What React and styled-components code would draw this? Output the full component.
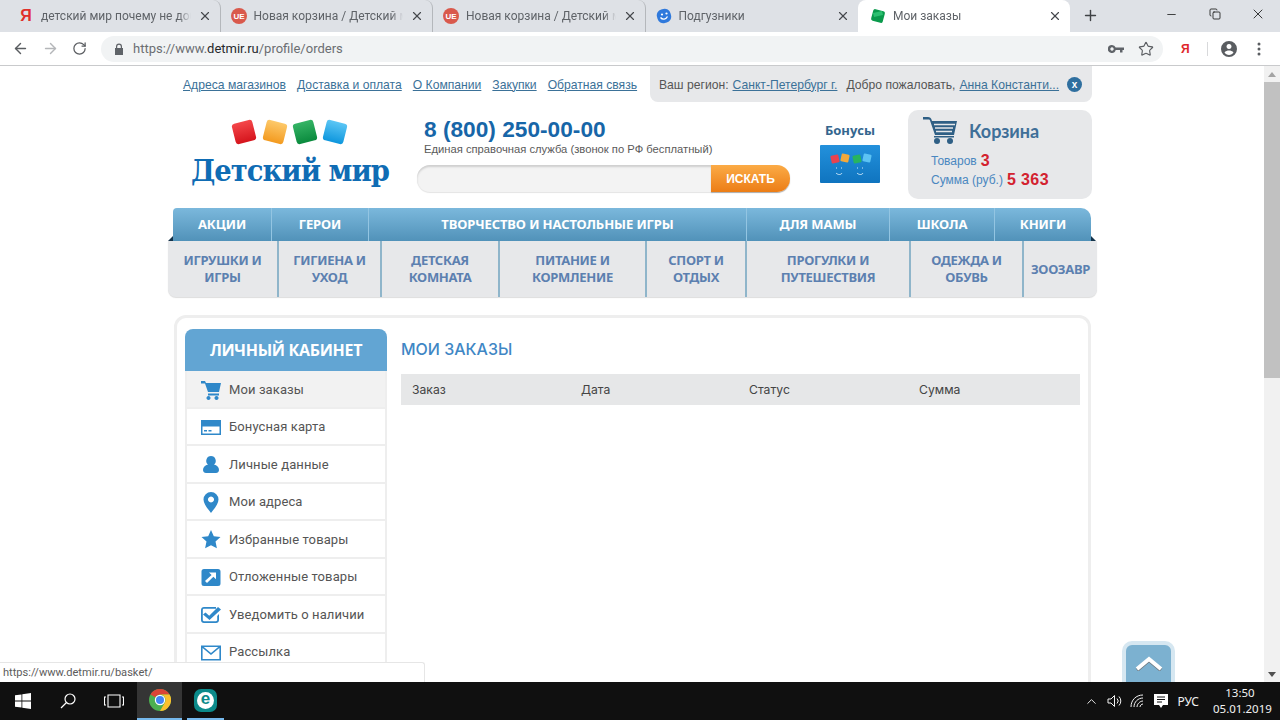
import React from 'react';
import styled, { createGlobalStyle } from 'styled-components';
import { ArrowLeft, ArrowRight, RotateCw, Star, Plus, X, Minus, Copy, ChevronUp } from 'lucide-react';

const GlobalStyle = createGlobalStyle`
  html, body { margin: 0; padding: 0; height: 100%; overflow: hidden; background: #fff; }
  * { box-sizing: border-box; }
`;

const Screen = styled.div`
  width: 1280px;
  height: 720px;
  display: flex;
  flex-direction: column;
  overflow: hidden;
  font-family: "Liberation Sans", Arial, sans-serif;
`;

/* browser chrome */
const TabStrip = styled.div`
  height: 32px;
  flex: none;
  background: #dee1e6;
  display: flex;
  padding-left: 8px;
`;

const Tab = styled.div`
  width: ${p => (p.$active ? '212px' : '212.5px')};
  height: 32px;
  display: flex;
  align-items: center;
  padding: 0 7px 0 ${p => (p.$active ? '10px' : '8px')};
  gap: 7px;
  background: ${p => (p.$active ? '#fff' : 'transparent')};
  border-radius: 8px 8px 0 0;
  border-right: ${p => (p.$sep ? '1px solid #b4b7bb' : '0')};
  background-clip: padding-box;
`;

const TabIcon = styled.span`
  width: 16px;
  height: 16px;
  flex: none;
  margin-left: 2px;
  display: flex;
  align-items: center;
  justify-content: center;
`;

const TabTitle = styled.span`
  flex: 1;
  min-width: 0;
  white-space: nowrap;
  overflow: hidden;
  font: 12px "Roboto", sans-serif;
  color: #5f6368;
  -webkit-mask-image: linear-gradient(to right, #000 92%, transparent 100%);
`;

const TabClose = styled(X)`
  flex: none;
  width: 14px;
  height: 14px;
  color: #45484c;
  margin-right: 1px;
`;

const NewTab = styled(Plus)`
  width: 17px;
  height: 17px;
  margin: 7px 0 0 12px;
  color: #3f4245;
`;

const WindowButtons = styled.div`
  margin-left: auto;
  display: flex;
  height: 28px;
  align-items: center;
  color: #1c1c1c;
`;

const WindowButton = styled.span`
  width: 43.5px;
  display: flex;
  justify-content: center;
`;

const Toolbar = styled.div`
  height: 34px;
  flex: none;
  background: #fff;
  border-bottom: 1px solid #c9cacc;
  display: flex;
  align-items: center;
  padding: 0 0 0 12px;
  color: #5f6368;
`;

const NavIcon = styled.span`
  width: 30px;
  display: flex;
  color: ${p => (p.$off ? '#b4b6b9' : '#5a5d61')};
`;

const Omnibox = styled.div`
  margin-left: -1px;
  width: 1062px;
  height: 26px;
  border-radius: 13px;
  background: #f1f3f4;
  display: flex;
  align-items: center;
  padding-left: 13px;
`;

const Url = styled.span`
  margin-left: 9px;
  font: 13px "Roboto", sans-serif;
  color: #6b6e72;
  b { font-weight: 400; color: #27292c; }
`;

const OmniTools = styled.div`
  margin-left: auto;
  display: flex;
  align-items: center;
  gap: 14px;
  padding-right: 9px;
`;

const ToolArea = styled.div`
  display: flex;
  align-items: center;
  flex: 1;
`;

const YaMark = styled.span`
  margin-left: 18px;
  width: 27px;
  font: bold 12px "Liberation Sans", sans-serif;
  color: #e0262b;
  border-right: 1px solid #d8d9db;
`;

/* the page itself */
const Viewport = styled.div`
  flex: 1;
  min-height: 0;
  display: flex;
  position: relative;
`;

const PageBody = styled.div`
  flex: 1;
  overflow: hidden;
`;

const Container = styled.div`
  width: 929px;
  margin-left: 168px;
`;

const TopBar = styled.div`
  height: 36px;
  display: flex;
  padding: 0 5px 0 15px;
`;

const TopLinks = styled.div`
  display: flex;
  align-items: center;
  gap: 11px;
  padding-top: 1px;
`;

const TopLink = styled.a`
  font-size: 12.15px;
  color: #3b7198;
  text-decoration: underline;
`;

const RegionBox = styled.div`
  margin-left: auto;
  width: 442px;
  background: #e7e8ea;
  border-radius: 0 0 8px 8px;
  display: flex;
  align-items: center;
  padding: 1px 0 0 9px;
  font-size: 12.15px;
  color: #555;
  white-space: nowrap;
`;

const RegionLink = styled.a`
  color: #3b7198;
  text-decoration: underline;
  margin: 0 ${p => p.$gap || 0}px 0 4px;
`;

const CloseBadge = styled.span`
  margin-left: auto;
  margin-right: 10px;
  width: 15px;
  height: 15px;
  border-radius: 50%;
  background: #2f6f9f;
  color: #fff;
  font: bold 10px/15px "Liberation Sans", sans-serif;
  text-align: center;
`;

const Header = styled.div`
  margin-top: 8px;
  height: 88px;
  display: flex;
  padding-left: 22px;
`;

const LogoBlock = styled.div`
  width: 200px;
  display: flex;
  flex-direction: column;
  align-items: center;
  padding-top: 8px;
`;

const LogoText = styled.div`
  font: bold 30.5px/38px "DejaVu Serif Condensed", "Liberation Serif", serif;
  color: #0f6cb4;
  white-space: nowrap;
  margin-top: 5px;
  letter-spacing: -1px;
`;

const InfoBlock = styled.div`
  width: 373px;
  margin-left: 27px;
`;

const Phone = styled.div`
  margin: 7px 0 0 7px;
  font: bold 22.7px/24px "Liberation Sans", sans-serif;
  color: #1766a8;
`;

const Hotline = styled.div`
  margin: 1px 0 0 7px;
  font-size: 11.22px;
  line-height: 14px;
  color: #5a5a5a;
`;

const SearchRow = styled.div`
  margin-top: 9px;
  display: flex;
  height: 27px;
`;

const SearchInput = styled.input`
  width: 296px;
  height: 27px;
  border: 0;
  outline: none;
  border-radius: 13px 0 0 13px;
  background: #f3f3f3;
  box-shadow: inset 0 2px 2px #cfcfcf, 0 1px 1px #e4e4e4;
`;

const SearchButton = styled.button`
  width: 79px;
  height: 27px;
  margin-left: -2px;
  border: 0;
  padding: 0;
  border-radius: 0 13px 13px 0;
  background: linear-gradient(#fbab46, #ec7d16);
  box-shadow: 0 1px 1px #aaa;
  color: #fff;
  font: bold 12px "Liberation Sans", sans-serif;
`;

const BonusBlock = styled.div`
  margin-left: 30px;
  width: 60px;
  display: flex;
  flex-direction: column;
  align-items: center;
`;

const BonusTitle = styled.div`
  margin-top: 12px;
  font: bold 13px/16px "Open Sans", sans-serif;
  color: #34668e;
  white-space: nowrap;
`;

const BonusCard = styled.svg`
  margin-top: 7px;
  width: 60px;
  height: 38px;
  display: block;
`;

const CartBox = styled.div`
  margin-left: 28px;
  width: 184px;
  height: 89px;
  border-radius: 10px;
  background: #e7e8ea;
  padding: 7px 0 0 15px;
`;

const CartHead = styled.div`
  display: flex;
  align-items: center;
  gap: 12px;
  margin-bottom: 6px;
`;

const CartTitle = styled.div`
  font: bold 18px "Lato", sans-serif;
  color: #3f6f98;
`;

const CartLine = styled.div`
  margin-left: 8px;
  height: 19px;
  display: flex;
  align-items: center;
  gap: 4px;
  font-size: 12px;
  color: #4a87c0;
`;

const CartValue = styled.span`
  font: bold 16px "Liberation Sans", sans-serif;
  color: #d3222f;
  letter-spacing: 0.4px;
`;

const NavTop = styled.div`
  position: relative;
  margin: 10px 6px 0 5px;
  height: 33px;
  display: grid;
  grid-template-columns: 98px 97px 378px 143px 105px 97px;
  background: linear-gradient(#7bb8dc, #5192b9);
  border-radius: 4px 10px 0 0;
  &::before, &::after {
    content: '';
    position: absolute;
    bottom: 0;
    border-bottom: 5px solid #14334a;
  }
  &::before { left: -5px; border-left: 5px solid transparent; }
  &::after { right: -5px; border-right: 5px solid transparent; }
`;

const NavTopCell = styled.a`
  display: flex;
  align-items: center;
  justify-content: center;
  padding-bottom: 1px;
  font: bold 13px "Noto Sans", sans-serif;
  letter-spacing: -0.1px;
  color: #fff;
  border-left: ${p => (p.$first ? '0' : '1px solid #93c5e2')};
`;

const NavBottom = styled.div`
  height: 56px;
  display: grid;
  grid-template-columns: 109px 103px 118px 147px 100px 164px 113px 75px;
  background: #e7e8ea;
  border-radius: 0 0 8px 8px;
  box-shadow: 0 1px 1px #ddd;
`;

const NavBottomCell = styled.a`
  display: flex;
  align-items: center;
  justify-content: center;
  text-align: center;
  white-space: pre-line;
  font: bold 13px/17px "Noto Sans", sans-serif;
  letter-spacing: -0.3px;
  color: #5c80b0;
  border-left: ${p => (p.$first ? '0' : '2px solid #8fb5ca')};
`;

const Card = styled.div`
  margin: 18px 6px 0 6px;
  width: 917px;
  border: 3px solid #eeeeee;
  border-radius: 12px;
  padding: 11px 8px 0;
  display: flex;
  gap: 14px;
  height: 500px;
`;

const Sidebar = styled.aside`
  width: 202px;
  flex: none;
`;

const SidebarHead = styled.div`
  height: 42px;
  border-radius: 8px 8px 0 0;
  background: #62a5d3;
  display: flex;
  align-items: center;
  justify-content: center;
  padding-bottom: 1px;
  font: bold 16px "Open Sans", sans-serif;
  letter-spacing: -0.3px;
  color: #fff;
`;

const SideItem = styled.a`
  height: 37.5px;
  display: flex;
  align-items: center;
  padding: 1px 0 0 13px;
  border: 2px solid #eeeeee;
  border-width: 0 2px 2px;
  background: ${p => (p.$active ? '#f2f2f2' : '#fff')};
  font: 13px "Roboto", sans-serif;
  letter-spacing: 0.1px;
  color: #555;
`;

const SideIcon = styled.svg`
  width: 22px;
  height: 22px;
  margin-right: 7px;
  flex: none;
  fill: #2f88c9;
`;

const Content = styled.main`
  flex: 1;
  min-width: 0;
`;

const ContentTitle = styled.h1`
  margin: 0;
  height: 40px;
  display: flex;
  align-items: center;
  font: 500 16px "Inter", sans-serif;
  color: #3f87c5;
`;

const OrdersHead = styled.div`
  margin-top: 5px;
  height: 31px;
  display: grid;
  grid-template-columns: 169px 168px 170px 1fr;
  padding-left: 11px;
  align-items: center;
  background: #e6e7e8;
  font: 12.2px "Inter", sans-serif;
  color: #444;
`;

const Scrollbar = styled.div`
  width: 16px;
  flex: none;
  background: #f1f1f1;
  display: flex;
  flex-direction: column;
  align-items: center;
`;

const ScrollArrow = styled.span`
  height: 16px;
  width: 16px;
  flex: none;
  display: flex;
  align-items: center;
  justify-content: center;
  &::before {
    content: '';
    border-left: 4px solid transparent;
    border-right: 4px solid transparent;
    ${p => (p.$down ? 'border-top: 5px solid #505050;' : 'border-bottom: 5px solid #a3a3a3;')}
  }
`;

const ScrollThumb = styled.span`
  width: 16px;
  height: 296px;
  background: #c1c1c1;
`;

const ScrollGap = styled.span`
  flex: 1;
`;

const StatusBubble = styled.div`
  position: absolute;
  left: 0;
  bottom: 0;
  width: 425px;
  height: 20px;
  background: #fff;
  border: 1px solid #e6e6e6;
  border-width: 1px 1px 0 0;
  border-radius: 0 3px 0 0;
  padding: 3px 0 0 3px;
  font: 11.1px "Roboto", sans-serif;
  color: #5c5c5c;
`;

const BackToTop = styled.div`
  position: absolute;
  right: 105px;
  bottom: 0;
  width: 53px;
  height: 41px;
  border: 4px solid #d6e7f1;
  border-bottom: 0;
  border-radius: 10px 10px 0 0;
  background: #7cb1d0;
  display: flex;
  justify-content: center;
  padding-top: 11px;
`;

/* windows taskbar */
const Taskbar = styled.div`
  height: 38px;
  flex: none;
  background: #101010;
  display: flex;
  align-items: stretch;
  color: #fff;
`;

const TaskSlot = styled.div`
  width: ${p => p.$w}px;
  margin-right: ${p => p.$mr || 0}px;
  display: flex;
  align-items: center;
  justify-content: center;
  background: ${p => (p.$open ? '#353535' : 'transparent')};
  border-bottom: ${p => (p.$running ? '2px solid #76b9ed' : '0')};
`;

const EsetBadge = styled.span`
  width: 23px;
  height: 23px;
  border-radius: 7px;
  background: #0c8a8a;
  display: flex;
  align-items: center;
  justify-content: center;
  &::after {
    content: 'e';
    width: 17px;
    height: 17px;
    border-radius: 50%;
    background: #fff;
    color: #0c8a8a;
    text-align: center;
    font: bold 17px/14px "Liberation Sans", sans-serif;
  }
`;

const Tray = styled.div`
  margin-left: auto;
  display: flex;
  align-items: center;
  padding-right: 13px;
  color: #f2f2f2;
`;

const TrayIcon = styled.span`
  width: ${p => p.$w || 23}px;
  display: flex;
  justify-content: center;
`;

const Lang = styled.span`
  margin: 0 0 0 5px;
  font: 12px "Noto Sans", sans-serif;
`;

const Clock = styled.div`
  margin-left: 14px;
  width: 54px;
  text-align: center;
  white-space: nowrap;
  font: 11.5px/16px "Noto Sans", sans-serif;
`;

const tabs = [
  { title: 'детский мир почему не доба', icon: 'ya' },
  { title: 'Новая корзина / Детский мир', icon: 'ue' },
  { title: 'Новая корзина / Детский мир', icon: 'ue' },
  { title: 'Подгузники', icon: 'smile' },
  { title: 'Мои заказы', icon: 'cube', active: true },
];

const topMenu = [
  ['АКЦИИ'],
  ['ГЕРОИ'],
  ['ТВОРЧЕСТВО И НАСТОЛЬНЫЕ ИГРЫ'],
  ['ДЛЯ МАМЫ'],
  ['ШКОЛА'],
  ['КНИГИ'],
];

const bottomMenu = [
  'ИГРУШКИ И\nИГРЫ',
  'ГИГИЕНА И\nУХОД',
  'ДЕТСКАЯ\nКОМНАТА',
  'ПИТАНИЕ И\nКОРМЛЕНИЕ',
  'СПОРТ И\nОТДЫХ',
  'ПРОГУЛКИ И\nПУТЕШЕСТВИЯ',
  'ОДЕЖДА И\nОБУВЬ',
  'ЗООЗАВР',
];

const sideIcons = {
  cart: <path d="M1 3h4l1 2h15l-2 9H8L5 5.500H1zM8 15.500h11v2H8zM8.500 18a2 2 0 1 0 .01 0zM16.500 18a2 2 0 1 0 .01 0z" />,
  card: <path fillRule="evenodd" d="M1 4h20v15H1zM2.500 10.500V17.500h17V10.500zM4 14h3v1.500H4zm4.500 0h3v1.500h-3z" />,
  user: <path d="M11 3a4.800 4.800 0 0 1 3 8.500c3 1 5 2.500 5 5.500 0 2-1.500 3-3 3H6c-1.500 0-3-1-3-3 0-3 2-4.500 5-5.500A4.800 4.800 0 0 1 11 3z" />,
  pin: <path fillRule="evenodd" d="M11 1a7.500 7.500 0 0 1 7.500 7.500C18.500 13 14 18 11 22 8 18 3.500 13 3.500 8.500A7.500 7.500 0 0 1 11 1zm0 4.500a3 3 0 1 0 .01 0z" />,
  star: <path d="M11 2l2.800 6.200 6.700.700-5 4.600 1.400 6.700L11 17.300 5.100 20.200l1.400-6.700-5-4.600 6.700-.700z" />,
  later: <path fillRule="evenodd" d="M4 3h14a2.500 2.500 0 0 1 2.500 2.500v12A2.500 2.500 0 0 1 18 20H4a2.500 2.500 0 0 1-2.500-2.500v-12A2.500 2.500 0 0 1 4 3zm5 3.500l2.600 2.400-6.600 6 2 2 6.400-6.200 2.600 2.600V6.500z" />,
  check: <path fillRule="evenodd" d="M4 4h12v1.800H4c-.7 0-1.200.5-1.200 1.200v10c0 .7.500 1.200 1.200 1.200h12c.7 0 1.200-.5 1.200-1.200v-4l1.800-2V17c0 1.700-1.300 3-3 3H4c-1.700 0-3-1.300-3-3V7c0-1.700 1.300-3 3-3zm1.500 5.500l3.700 3.200L18 4l3 2.500L9.500 17 3 11.500z" />,
  mail: <path fillRule="evenodd" d="M1 4.500h20v15H1zm2.800 1.600l7.200 6 7.200-6zM2.600 7v11h16.800V7L11 14z" />,
};

const sideItems = [
  { label: 'Мои заказы', icon: 'cart', active: true },
  { label: 'Бонусная карта', icon: 'card' },
  { label: 'Личные данные', icon: 'user' },
  { label: 'Мои адреса', icon: 'pin' },
  { label: 'Избранные товары', icon: 'star' },
  { label: 'Отложенные товары', icon: 'later' },
  { label: 'Уведомить о наличии', icon: 'check' },
  { label: 'Рассылка', icon: 'mail' },
];

function Favicon({ kind }) {
  if (kind === 'ya') {
    return <span style={{ font: 'bold 16px "Liberation Sans"', color: '#e0302b' }}>Я</span>;
  }
  if (kind === 'ue') {
    return (
      <svg width="16" height="16" viewBox="0 0 16 16">
        <circle cx="8" cy="8" r="8" fill="#d9594c" />
        <text x="8" y="11" textAnchor="middle" fontSize="8" fontWeight="bold" fontFamily="Liberation Sans" fill="#fff">UE</text>
      </svg>
    );
  }
  if (kind === 'smile') {
    return (
      <svg width="16" height="16" viewBox="0 0 16 16">
        <rect x="1" y="1" width="14" height="14" rx="6" fill="#2f79dc" transform="rotate(-15 8 8)" />
        <circle cx="6" cy="6.500" r="1.100" fill="#fff" />
        <circle cx="10.500" cy="5.500" r="1.100" fill="#fff" />
        <path d="M4.500 9.500c2 2.500 5.500 2 7-1" stroke="#fff" strokeWidth="1.300" fill="none" />
      </svg>
    );
  }
  return (
    <svg width="16" height="16" viewBox="0 0 16 16">
      <rect x="2" y="2" width="12" height="12" rx="2" fill="#0a9a4c" transform="rotate(15 8 8)" />
      <path d="M3 5l9-2 1 4-9 2z" fill="#2cc070" />
    </svg>
  );
}

function LogoBlocks() {
  const blocks = [
    { x: 14, a: -14, from: '#f4474a', to: '#d5141c' },
    { x: 45, a: 14, from: '#fdc96a', to: '#f39a1f' },
    { x: 75, a: -14, from: '#35b465', to: '#0a8a3d' },
    { x: 105, a: 14, from: '#5cc6f5', to: '#0d96dd' },
  ];
  return (
    <svg width="120" height="28" viewBox="0 0 120 28">
      <defs>
        {blocks.map((b, i) => (
          <linearGradient key={i} id={`logoBlock${i}`} x1="0" y1="0" x2="0" y2="1">
            <stop offset="0" stopColor={b.from} />
            <stop offset="1" stopColor={b.to} />
          </linearGradient>
        ))}
      </defs>
      {blocks.map((b, i) => (
        <rect
          key={i}
          x={b.x - 10.500}
          y="3.500"
          width="21"
          height="21"
          rx="3"
          fill={`url(#logoBlock${i})`}
          transform={`rotate(${b.a} ${b.x} 14)`}
        />
      ))}
    </svg>
  );
}

function CartIcon() {
  return (
    <svg width="34" height="28" viewBox="0 0 34 28" fill="#2f5f85">
      <path d="M0 0h5c2 0 3 1 3.500 2.500L9 4h25l-3 14H12L7 3.500C6.800 2.800 6.400 2.500 5.500 2.500H0z" />
      <path d="M11 7.500h21M12 11h18M13 14.500h16" stroke="#e7e8ea" strokeWidth="1.500" />
      <circle cx="14" cy="24" r="3" />
      <circle cx="27" cy="24" r="3" />
      <rect x="11" y="19" width="20" height="1.500" />
    </svg>
  );
}

function ChromeLogo() {
  return (
    <svg width="22" height="22" viewBox="0 0 22 22">
      <circle cx="11" cy="11" r="11" fill="#4caf50" />
      <path d="M11 0a11 11 0 0 1 9.530 5.500H11a5.500 5.500 0 0 0-4.760 2.750L1.470 5.500A11 11 0 0 1 11 0z" fill="#db4437" />
      <path d="M20.530 5.500A11 11 0 0 1 11 22l4.760-8.250A5.500 5.500 0 0 0 11 5.500z" fill="#fbc02d" />
      <circle cx="11" cy="11" r="5.200" fill="#fff" />
      <circle cx="11" cy="11" r="4" fill="#4285f4" />
    </svg>
  );
}

function App() {
  return (
    <Screen>
      <GlobalStyle />
      <TabStrip>
        {tabs.map((t, i) => (
          <Tab key={i} $active={t.active} $sep={i < 3}>
            <TabIcon><Favicon kind={t.icon} /></TabIcon>
            <TabTitle>{t.title}</TabTitle>
            <TabClose strokeWidth={2} />
          </Tab>
        ))}
        <NewTab strokeWidth={2} />
        <WindowButtons>
          <WindowButton><Minus size={13} strokeWidth={1.5} /></WindowButton>
          <WindowButton><Copy size={12} strokeWidth={1.7} /></WindowButton>
          <WindowButton><X size={16} strokeWidth={1.3} /></WindowButton>
        </WindowButtons>
      </TabStrip>

      <Toolbar>
        <NavIcon><ArrowLeft size={17} strokeWidth={2} /></NavIcon>
        <NavIcon $off><ArrowRight size={17} strokeWidth={2} /></NavIcon>
        <NavIcon><RotateCw size={15} strokeWidth={2} /></NavIcon>
        <Omnibox>
          <svg width="10" height="12" viewBox="0 0 10 12" fill="#5f6368">
            <path fillRule="evenodd" d="M2 5V3.500a3 3 0 0 1 6 0V5h1v7H1V5zm1.200 0h3.600V3.500a1.800 1.800 0 0 0-3.600 0z" />
          </svg>
          <Url>https://www.<b>detmir.ru</b>/profile/orders</Url>
          <OmniTools>
            <svg width="16" height="10" viewBox="0 0 16 10" fill="#5f6368">
              <path fillRule="evenodd" d="M4 1a4 4 0 0 1 3.700 2.500H16V6h-1.500v2.500h-2.500V6H7.700A4 4 0 1 1 4 1zm0 2.300a1.700 1.700 0 1 0 .01 0z" />
            </svg>
            <Star size={16} strokeWidth={1.7} color="#5a5d61" />
          </OmniTools>
        </Omnibox>
        <ToolArea>
          <YaMark>Я</YaMark>
          <svg style={{ marginLeft: 13 }} width="16" height="16" viewBox="0 0 16 16" fill="#5a5d61">
            <path fillRule="evenodd" d="M8 0a8 8 0 1 1 0 16A8 8 0 0 1 8 0zm0 3a2.500 2.500 0 1 0 .01 0zM3.500 11.500C4.500 13 6 14 8 14s3.500-1 4.500-2.500C11.500 10 9.500 9.500 8 9.500s-3.500.5-4.500 2z" />
          </svg>
          <svg style={{ marginLeft: 20 }} width="4" height="14" viewBox="0 0 4 14" fill="#5a5d61">
            <circle cx="2" cy="2" r="1.500" />
            <circle cx="2" cy="7" r="1.500" />
            <circle cx="2" cy="12" r="1.500" />
          </svg>
        </ToolArea>
      </Toolbar>

      <Viewport>
        <PageBody>
          <Container>
            <TopBar>
              <TopLinks>
                <TopLink>Адреса магазинов</TopLink>
                <TopLink>Доставка и оплата</TopLink>
                <TopLink>О Компании</TopLink>
                <TopLink>Закупки</TopLink>
                <TopLink>Обратная связь</TopLink>
              </TopLinks>
              <RegionBox>
                Ваш регион:
                <RegionLink $gap={9}>Санкт-Петербург г.</RegionLink>
                Добро пожаловать,
                <RegionLink>Анна Константи...</RegionLink>
                <CloseBadge>x</CloseBadge>
              </RegionBox>
            </TopBar>

            <Header>
              <LogoBlock>
                <LogoBlocks />
                <LogoText>Детский мир</LogoText>
              </LogoBlock>
              <InfoBlock>
                <Phone>8 (800) 250-00-00</Phone>
                <Hotline>Единая справочная служба (звонок по РФ бесплатный)</Hotline>
                <SearchRow>
                  <SearchInput />
                  <SearchButton>ИСКАТЬ</SearchButton>
                </SearchRow>
              </InfoBlock>
              <BonusBlock>
                <BonusTitle>Бонусы</BonusTitle>
                <BonusCard viewBox="0 0 60 38">
                  <defs>
                    <linearGradient id="bonusBg" x1="0" y1="0" x2="0" y2="1">
                      <stop offset="0" stopColor="#2391dc" />
                      <stop offset="1" stopColor="#0f74bf" />
                    </linearGradient>
                  </defs>
                  <rect width="60" height="38" rx="1" fill="url(#bonusBg)" />
                  <rect x="11" y="10" width="8" height="8" rx="1" fill="#e8434f" transform="rotate(-12 15 14)" />
                  <rect x="21" y="9" width="8" height="8" rx="1" fill="#f2a93b" transform="rotate(12 25 13)" />
                  <rect x="33" y="10" width="8" height="8" rx="1" fill="#27b45f" transform="rotate(-12 37 14)" />
                  <rect x="43" y="9" width="8" height="8" rx="1" fill="#5cc3f4" transform="rotate(12 47 13)" />
                  <path d="M16 23h1M21 23h1M16 28c2 2 5 2 6 0M37 23h1M42 23h1M37 28c2 2 5 2 6 0" stroke="#cfe9fa" strokeWidth="1" fill="none" />
                </BonusCard>
              </BonusBlock>
              <CartBox>
                <CartHead>
                  <CartIcon />
                  <CartTitle>Корзина</CartTitle>
                </CartHead>
                <CartLine>Товаров <CartValue>3</CartValue></CartLine>
                <CartLine>Сумма (руб.) <CartValue>5 363</CartValue></CartLine>
              </CartBox>
            </Header>

            <NavTop>
              {topMenu.map(([label], i) => (
                <NavTopCell key={label} $first={i === 0}>{label}</NavTopCell>
              ))}
            </NavTop>
            <NavBottom>
              {bottomMenu.map((label, i) => (
                <NavBottomCell key={label} $first={i === 0}>{label}</NavBottomCell>
              ))}
            </NavBottom>

            <Card>
              <Sidebar>
                <SidebarHead>ЛИЧНЫЙ КАБИНЕТ</SidebarHead>
                {sideItems.map(item => (
                  <SideItem key={item.label} $active={item.active}>
                    <SideIcon viewBox="0 0 22 22">{sideIcons[item.icon]}</SideIcon>
                    {item.label}
                  </SideItem>
                ))}
              </Sidebar>
              <Content>
                <ContentTitle>МОИ ЗАКАЗЫ</ContentTitle>
                <OrdersHead>
                  <span>Заказ</span>
                  <span>Дата</span>
                  <span>Статус</span>
                  <span>Сумма</span>
                </OrdersHead>
              </Content>
            </Card>
          </Container>
        </PageBody>
        <Scrollbar>
          <ScrollArrow />
          <ScrollThumb />
          <ScrollGap />
          <ScrollArrow $down />
        </Scrollbar>
        <BackToTop>
          <svg width="28" height="15" viewBox="0 0 28 15">
            <path d="M2 13L14 3l12 10" stroke="#6f7a80" strokeWidth="4" fill="none" transform="translate(0 1)" />
            <path d="M2 13L14 3l12 10" stroke="#fff" strokeWidth="4" fill="none" />
          </svg>
        </BackToTop>
        <StatusBubble>https://www.detmir.ru/basket/</StatusBubble>
      </Viewport>

      <Taskbar>
        <TaskSlot $w={45}>
          <svg width="16" height="16" viewBox="0 0 16 16" fill="#fff">
            <path d="M0 2.300l6.500-.9v6.200H0zM7.300 1.300L16 0v7.600H7.300zM0 8.400h6.500v6.200L0 13.700zM7.300 8.400H16V16l-8.700-1.300z" />
          </svg>
        </TaskSlot>
        <TaskSlot $w={45}>
          <svg width="16" height="16" viewBox="0 0 16 16" fill="none" stroke="#fff" strokeWidth="1.200">
            <circle cx="10" cy="6" r="5" />
            <path d="M6.500 9.500L1 15" />
          </svg>
        </TaskSlot>
        <TaskSlot $w={47}>
          <svg width="20" height="14" viewBox="0 0 20 14" fill="none" stroke="#fff" strokeWidth="1.100">
            <path d="M4 1h12v12H4zM2 3H.5v8H2M18 3h1.500v8H18" />
          </svg>
        </TaskSlot>
        <TaskSlot $w={45} $mr={5} $open $running><ChromeLogo /></TaskSlot>
        <TaskSlot $w={37} $running><EsetBadge /></TaskSlot>
        <Tray>
          <TrayIcon><ChevronUp size={15} strokeWidth={1.5} /></TrayIcon>
          <TrayIcon>
            <svg width="16" height="14" viewBox="0 0 16 14" fill="none" stroke="#f2f2f2" strokeWidth="1">
              <path d="M1 5h3l3.500-3.500v11L4 9H1zM10 4.500a3.500 3.500 0 0 1 0 5M12 2.500a6.500 6.500 0 0 1 0 9" />
            </svg>
          </TrayIcon>
          <TrayIcon>
            <svg width="16" height="14" viewBox="0 0 16 14" fill="none" stroke="#f2f2f2" strokeWidth="1">
              <path d="M1 13C1 6 6 1 13 1M4 13c0-5 4-9 9-9M7 13c0-3 3-6 6-6M10 13c0-1.500 1.500-3 3-3" />
            </svg>
          </TrayIcon>
          <TrayIcon>
            <svg width="16" height="16" viewBox="0 0 16 16">
              <path d="M1 1h14v11h-5l-2 3-2-3H1z" fill="#fff" />
              <path d="M4 4h8M4 6.500h8M4 9h5" stroke="#101010" strokeWidth="1" />
            </svg>
          </TrayIcon>
          <Lang>РУС</Lang>
          <Clock>13:50<br />05.01.2019</Clock>
        </Tray>
      </Taskbar>
    </Screen>
  );
}

export default App;
